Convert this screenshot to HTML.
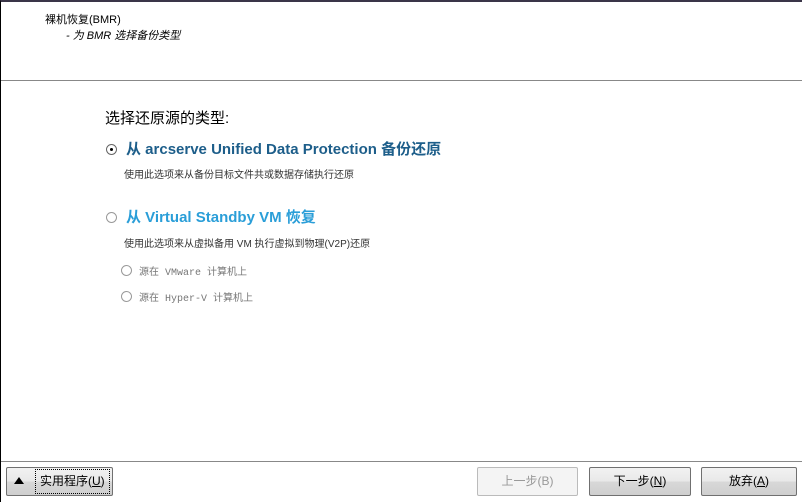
<!DOCTYPE html>
<html><head><meta charset="utf-8"><style>
*{margin:0;padding:0;box-sizing:border-box}
body{width:802px;height:502px;background:#fff;position:relative;overflow:hidden;font-family:"Liberation Sans","Noto Sans CJK SC",sans-serif;border-left:1px solid #000;border-top:2px solid #3a3548}
.a{position:absolute;white-space:nowrap}
.rad{position:absolute;width:11px;height:11px;border:1px solid #999;border-radius:50%;background:#fff}
.btn{position:absolute;top:465px;height:29px;border:1px solid #707070;background:linear-gradient(#f2f2f2,#e8e8e8 50%,#d8d8d8 51%,#cfcfcf);font-size:12px;text-align:center;line-height:27px;color:#000;border-radius:2px}
</style></head><body>
<div class="a" style="left:44px;top:9px;font-size:11px">裸机恢复(BMR)</div>
<div class="a" style="left:65px;top:25px;font-size:11px;font-style:italic">- 为 BMR 选择备份类型</div>
<div class="a" style="left:0;top:78px;width:802px;height:1px;background:#888"></div>
<div class="a" style="left:104px;top:105px;font-size:15px;color:#000">选择还原源的类型:</div>
<div class="rad" style="left:105px;top:142px;border-color:#666"><div style="position:absolute;left:3px;top:3px;width:3px;height:3px;background:#000;border-radius:50%"></div></div>
<div class="a" style="left:125px;top:136px;font-size:15px;font-weight:bold;color:#1d5e8a">从 arcserve Unified Data Protection 备份还原</div>
<div class="a" style="left:123px;top:164px;font-size:10px;color:#333">使用此选项来从备份目标文件共或数据存储执行还原</div>
<div class="rad" style="left:105px;top:210px"></div>
<div class="a" style="left:125px;top:204px;font-size:15px;font-weight:bold;color:#2a9ed8">从 Virtual Standby VM 恢复</div>
<div class="a" style="left:123px;top:233px;font-size:10px;color:#333">使用此选项来从虚拟备用 VM 执行虚拟到物理(V2P)还原</div>
<div class="rad" style="left:120px;top:263px"></div>
<div class="a" style="left:138px;top:261px;font-size:10px;color:#777;font-family:'Liberation Mono','Noto Sans CJK SC',monospace">源在 VMware 计算机上</div>
<div class="rad" style="left:120px;top:289px"></div>
<div class="a" style="left:138px;top:287px;font-size:10px;color:#777;font-family:'Liberation Mono','Noto Sans CJK SC',monospace">源在 Hyper-V 计算机上</div>
<div class="a" style="left:0;top:459px;width:802px;height:1px;background:#888"></div>
<div class="btn" style="left:5px;width:107px;text-align:left;padding-left:28px"><span style="position:absolute;left:7px;top:9px;width:0;height:0;border-left:5px solid transparent;border-right:5px solid transparent;border-bottom:7px solid #000"></span><span style="display:inline-block;border:1px dotted #000;line-height:23px;padding:0 4px;margin-top:1px">实用程序(<u>U</u>)</span></div>
<div class="btn" style="left:476px;width:101px;color:#999;border-color:#bbb;background:#f4f4f4">上一步(B)</div>
<div class="btn" style="left:588px;width:102px">下一步(<u>N</u>)</div>
<div class="btn" style="left:700px;width:96px">放弃(<u>A</u>)</div>
</body></html>
